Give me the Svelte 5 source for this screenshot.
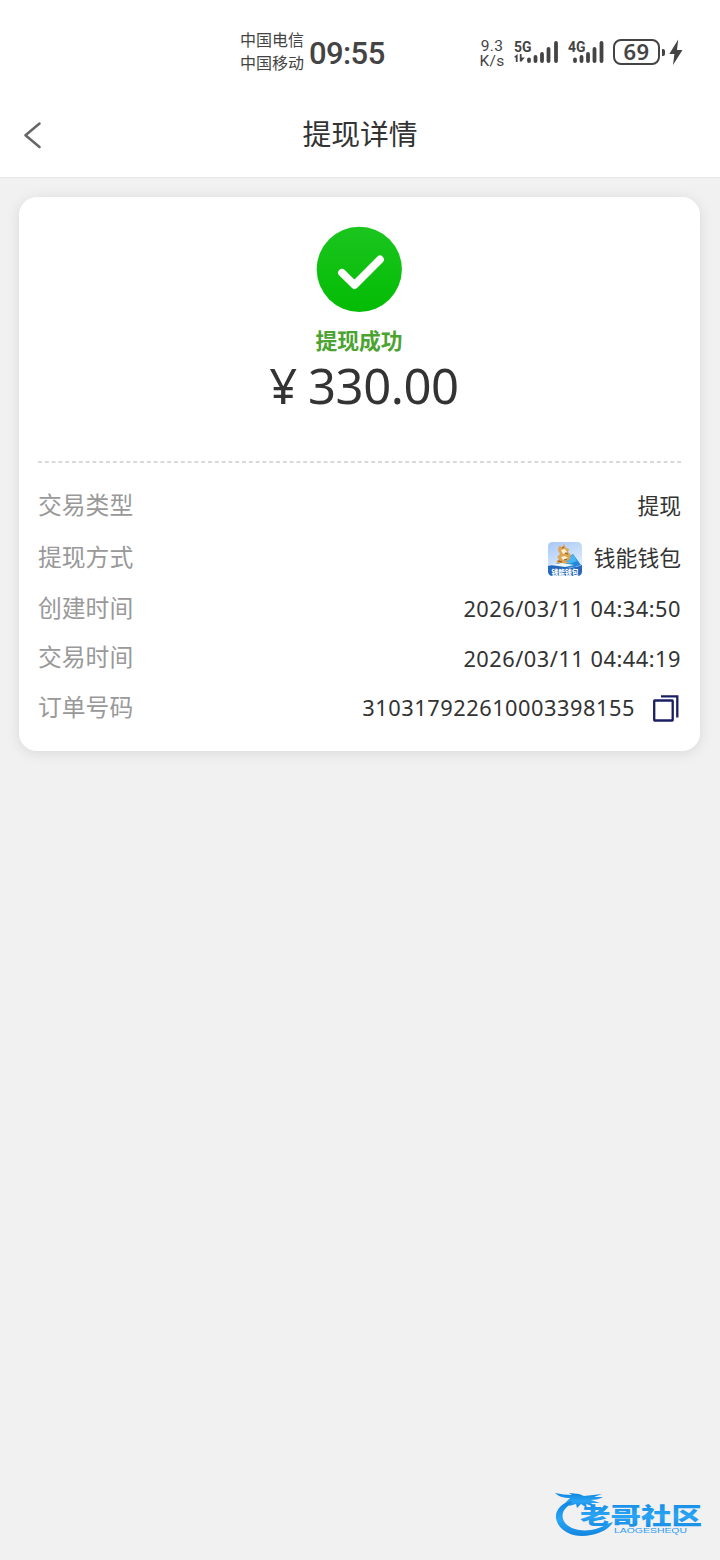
<script>
  const amount = '330.00';
  const orderNo = '310317922610003398155';

  const rows = [
    { label: '交易类型', value: '提现', height: 52 },
    { label: '提现方式', value: '钱能钱包', height: 52, wallet: true },
    { label: '创建时间', value: '2026/03/11 04:34:50', height: 50, kind: 'date' },
    { label: '交易时间', value: '2026/03/11 04:44:19', height: 49, kind: 'date' },
    { label: '订单号码', value: orderNo, height: 50, kind: 'order', copy: true }
  ];

  function copyOrder() {
    navigator.clipboard?.writeText(orderNo);
  }
</script>

<div class="page">
  <div class="status">
    <div class="carriers">
      <span>中国电信</span>
      <span>中国移动</span>
    </div>
    <div class="clock">09:55</div>
    <div class="indicators">
      <div class="speed">
        <span>9.3</span>
        <span>K/s</span>
      </div>
      <svg class="signal5" width="46" height="30" viewBox="0 0 46 30">
        <text x="0" y="14.500" class="net" textLength="17.500" lengthAdjust="spacingAndGlyphs">5G</text>
        <path d="M0.500 19.500 3.600 17V25H1.800V20.500H0.500zM5.800 17H7.600V20.500H10.800L7.600 24.500H5.800z" fill="#444" />
        <path d="M15 22.500v1.500M21.500 20v4M28 17v7M34.500 12v12M42 6v18" class="bars" />
      </svg>
      <svg class="signal4" width="37" height="30" viewBox="0 0 37 30">
        <text x="0" y="14.500" class="net" textLength="17.500" lengthAdjust="spacingAndGlyphs">4G</text>
        <path d="M7 22.500v1.500M13.500 20v4M20 17v7M26.500 12v12M33.500 6v18" class="bars" />
      </svg>
      <div class="battery">69</div>
      <div class="battery-tip"></div>
      <svg class="bolt" width="14" height="26" viewBox="0 0 14 26">
        <path d="M9.200 0.500 0.300 15h5.100L4 26 13.500 11H8z" fill="#444" />
      </svg>
    </div>
  </div>

  <header>
    <button class="back" aria-label="返回">
      <svg width="18" height="27" viewBox="0 0 18 27">
        <path d="M15.500 1.500 1.500 13.200 15.500 25" fill="none" stroke="#666" stroke-width="2.500" stroke-linecap="round" stroke-linejoin="round" />
      </svg>
    </button>
    <h1>提现详情</h1>
  </header>

  <main class="card">
    <section class="result">
      <svg class="tick" width="86" height="86" viewBox="0 0 86 86">
        <defs>
          <linearGradient id="ok" x1="0" y1="0" x2="0" y2="1">
            <stop offset="0" stop-color="#1bc51e" />
            <stop offset="1" stop-color="#03bc04" />
          </linearGradient>
        </defs>
        <circle cx="43.300" cy="43.300" r="42.600" fill="url(#ok)" />
        <path d="M26 46.800 38.500 59 64 33.500" fill="none" stroke="#fff" stroke-width="7.800" stroke-linecap="round" stroke-linejoin="round" />
      </svg>
      <div class="state">提现成功</div>
      <div class="amount"><span class="yen">¥</span>{amount}</div>
    </section>

    <svg class="divider" width="643" height="2" viewBox="0 0 643 2">
      <path d="M0 1h643" stroke="#dadada" stroke-width="2" stroke-dasharray="4 2.800" />
    </svg>

    {#each rows as row}
      <div class="row" style="height: {row.height}px">
        <span class="label">{row.label}</span>
        {#if row.wallet}
          <svg class="wallet" width="34" height="34" viewBox="0 0 34 34">
            <defs>
              <linearGradient id="sky" x1="0" y1="0" x2="0.400" y2="1">
                <stop offset="0" stop-color="#a9c8f5" />
                <stop offset="1" stop-color="#e4f1fd" />
              </linearGradient>
              <clipPath id="tile"><rect width="34" height="34" rx="4.500" /></clipPath>
            </defs>
            <g clip-path="url(#tile)">
              <rect width="34" height="34" fill="url(#sky)" />
              <path d="M8 22 14 19 25 12 33 23 27 25 8 25z" fill="#2588dc" />
              <path d="M18 19 25 12 29 19 21 22z" fill="#49b5f2" />
              <path d="M11 4 14 5 16 2 18 6 21 7 20 10 23 13 22 17 18 19 21 21 12 22 8 20 11 17 9 15 12 12 10 8z" fill="#dda451" />
              <path d="M13 8 17 7 19 10 15 12zM13 15l4-1 3 2-5 2z" fill="#fff0cf" />
              <path d="M14 6l2-1M17 11l3 1M10 19l4 1M16 18l3-1" stroke="#9a6734" stroke-width="1.300" />
              <path d="M0 24Q8 22 17 24.500T34 23V34H0z" fill="#2467bb" />
              <path d="M3 23 14 21 26 23 17 25z" fill="#eef8ff" />
              <text x="3.500" y="32.500" textLength="27" lengthAdjust="spacingAndGlyphs">钱能钱包</text>
            </g>
          </svg>
        {/if}
        <span class="value {row.kind ?? ''}">{row.value}</span>
        {#if row.copy}
          <button class="copy" aria-label="复制" onclick={copyOrder}>
            <svg width="26" height="27" viewBox="0 0 26 27">
              <path d="M8 1.300H24.300V22.500" fill="none" stroke="#1a1f63" stroke-width="2.300" />
              <rect x="1.200" y="5.500" width="18.500" height="20" rx="0.500" fill="none" stroke="#1a1f63" stroke-width="2.300" />
            </svg>
          </button>
        {/if}
      </div>
    {/each}
  </main>

  <svg class="brand" width="152" height="50" viewBox="0 0 152 50">
    <defs>
      <linearGradient id="brandBlue" x1="0" y1="0" x2="0" y2="1">
        <stop offset="0" stop-color="#0c83df" />
        <stop offset="0.550" stop-color="#2aa5f5" />
        <stop offset="1" stop-color="#1285df" />
      </linearGradient>
    </defs>
    <g fill="url(#brandBlue)">
      <!-- dragon curled around the name -->
      <path d="M20 10C10 13 3 20 4 28C6 41 22 49 39 45C50 43 58 38 61 32L55 34C43 42 23 43 14 34C7 26 11 17 22 13z" />
      <path d="M3 3C9 4 14 5 20 5L17 3 27 4 32 6 50 4 42 7 51 7C48 9 44 10 39 10L48 13 39 13 43 17 34 14 35 18 29 14 25 18 24 14 17 16 20 11 13 13 18 8C11 8 6 6 3 3z" />
      <text x="28" y="40" transform="scale(1 0.860)" class="brand-name" textLength="122" lengthAdjust="spacingAndGlyphs">老哥社区</text>
      <text x="62" y="43" class="brand-latin" textLength="73" lengthAdjust="spacingAndGlyphs">LAOGESHEQU</text>
    </g>
  </svg>
</div>

<style>
  :global(body) {
    margin: 0;
    background: #f1f1f1;
  }

  .page {
    display: flex;
    flex-direction: column;
    width: 720px;
    height: 1560px;
    overflow: hidden;
    background: #f1f1f1;
    color: #333;
    font-family: 'Noto Sans', 'Noto Sans CJK SC', sans-serif;
  }

  button {
    display: flex;
    padding: 0;
    border: 0;
    background: none;
  }

  svg {
    display: block;
    flex: none;
  }

  .status {
    display: flex;
    align-items: center;
    box-sizing: border-box;
    height: 92px;
    padding: 12px 37px 0 240px;
    background: #fff;
    color: #444;
  }

  .carriers {
    display: flex;
    flex-direction: column;
    width: 64px;
    margin-top: -2px;
    font: 16px/23px 'Noto Sans CJK SC', sans-serif;
    white-space: nowrap;
  }

  .clock {
    margin: 3px 0 0 5px;
    font: 500 31px/40px Roboto, sans-serif;
    letter-spacing: -0.6px;
  }

  .indicators {
    display: flex;
    align-items: center;
    margin-left: auto;
  }

  .speed {
    display: flex;
    flex-direction: column;
    align-items: center;
    width: 26px;
    margin: 3px 9px 0 0;
    font: 15.5px/15px Roboto, sans-serif;
    letter-spacing: 0.3px;
  }

  .signal4 {
    margin-left: 8px;
  }

  .net {
    font: 700 15px Roboto, sans-serif;
    fill: #444;
  }

  .bars {
    fill: none;
    stroke: #444;
    stroke-width: 3.8;
    stroke-linecap: round;
  }

  .battery {
    box-sizing: border-box;
    width: 47px;
    height: 26px;
    margin-left: 8px;
    border: 2px solid #444;
    border-radius: 8px;
    font: 600 22px/21px 'Noto Sans', sans-serif;
    letter-spacing: 0.5px;
    text-align: center;
  }

  .battery-tip {
    width: 3px;
    height: 7px;
    margin: 0 4px 0 2px;
    border-radius: 0 2px 2px 0;
    background: #444;
  }

  header {
    display: grid;
    grid-template-columns: 60px 1fr 60px;
    align-items: center;
    height: 85px;
    background: #fff;
    border-bottom: 1px solid #e8e8e8;
  }

  .back {
    margin: 1px 0 0 24px;
  }

  h1 {
    margin: -4px 0 0;
    color: #333;
    font: 400 28.8px/40px 'Noto Sans CJK SC', sans-serif;
    text-align: center;
  }

  .card {
    box-sizing: border-box;
    width: 681px;
    height: 554px;
    margin: 19px 0 0 19px;
    padding: 29px 19px 18px;
    border-radius: 18px;
    background: #fff;
    box-shadow: 0 2px 14px rgba(0, 0, 0, 0.1);
  }

  .result {
    display: flex;
    flex-direction: column;
    align-items: center;
    height: 235px;
  }

  .tick {
    margin-right: 1px;
  }

  .state {
    margin: 12px 1px 0 0;
    color: #4ba331;
    font: 700 21.8px/32px 'Noto Sans CJK SC', sans-serif;
  }

  .amount {
    display: flex;
    align-items: baseline;
    margin: -1px 0 0 9px;
    font-size: 49px;
    line-height: 60px;
    letter-spacing: -0.4px;
  }

  .yen {
    margin-right: 11px;
  }

  .divider {
    margin-bottom: 17px;
  }

  .row {
    display: flex;
    align-items: center;
  }

  .label {
    margin: -5px auto 0 0;
    color: #999;
    font: 23.8px/34px 'Noto Sans CJK SC', sans-serif;
  }

  .value {
    font: 21.8px/32px 'Noto Sans', 'Noto Sans CJK SC', sans-serif;
  }

  .date {
    letter-spacing: 0.5px;
  }

  .order {
    letter-spacing: 0.52px;
  }

  .wallet {
    margin: 2px 11.5px 0 0;
  }

  .wallet text {
    font: 900 7px 'Noto Sans CJK SC', sans-serif;
    fill: #fff;
  }

  .copy {
    margin-left: 18px;
    margin-right: 2px;
  }

  .brand {
    margin: auto 16px 20px auto;
  }

  .brand-name {
    font: 900 27px 'Noto Sans CJK SC', sans-serif;
  }

  .brand-latin {
    font: 400 7px 'Liberation Sans', sans-serif;
  }
</style>
